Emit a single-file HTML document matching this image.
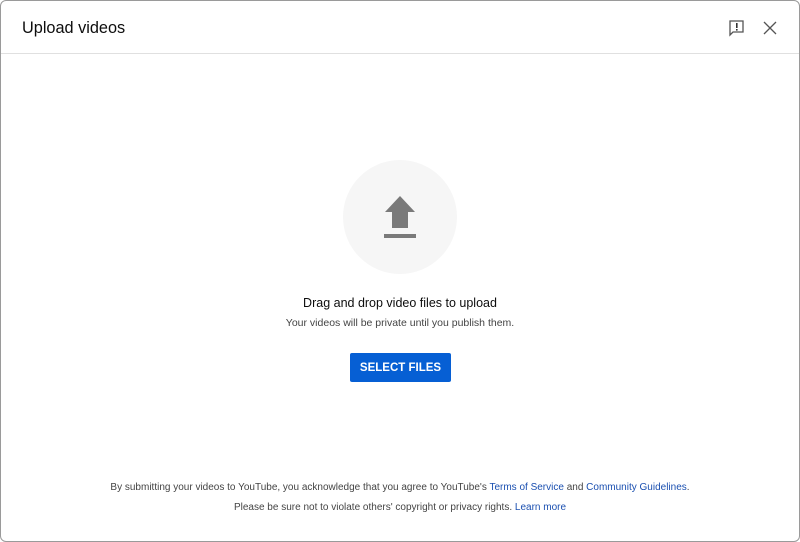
<!DOCTYPE html>
<html><head><style>
html,body{margin:0;padding:0;background:#fff;}
body{width:800px;height:542px;overflow:hidden;font-family:"Liberation Sans",Arial,sans-serif;position:relative;}
.frame{position:absolute;left:0;top:0;width:798px;height:540px;border:1px solid #9a9a9a;border-radius:6px;background:#fff;}
.hdr{position:absolute;left:0;top:0;right:0;height:52px;border-bottom:1px solid #e0e0e0;}
.title{position:absolute;left:21px;top:18px;font-size:16.3px;color:#0d0d0d;}
.circle{position:absolute;left:343px;top:160px;width:114px;height:114px;border-radius:50%;background:#f6f6f6;}
.t1{position:absolute;left:0;width:800px;top:296px;text-align:center;font-size:12.5px;color:#0d0d0d;}
.t2{position:absolute;left:0;width:800px;top:317px;text-align:center;font-size:10.5px;color:#444;}
.btn{position:absolute;left:350px;top:353px;width:101px;height:29px;background:#065fd4;color:#fff;font-size:11.5px;font-weight:bold;text-align:center;line-height:30px;border-radius:2px;}
.f1{position:absolute;left:0;width:800px;top:482px;text-align:center;font-size:10px;color:#444;}
.f2{position:absolute;left:0;width:800px;top:502px;text-align:center;font-size:10px;color:#444;}
a{color:#1a4fb0;text-decoration:none;}
</style></head><body>
<div class="frame">
<div class="hdr"><div class="title">Upload videos</div>
<svg style="position:absolute;left:727px;top:18px" width="18" height="18" viewBox="0 0 18 18"><path d="M2 2H15V13H5L2 16Z" fill="none" stroke="#555" stroke-width="1.3"/><rect x="8" y="4" width="1.6" height="5" fill="#333"/><rect x="8" y="10" width="1.6" height="1.6" fill="#333"/></svg>
<svg style="position:absolute;left:761px;top:19px" width="16" height="16" viewBox="0 0 16 16"><path d="M2 2L14 14M14 2L2 14" stroke="#555" stroke-width="1.3"/></svg>
</div>
</div>
<div class="circle"></div>
<svg style="position:absolute;left:380px;top:192px" width="40" height="50" viewBox="0 0 40 50"><path d="M20 4L35 20H28V36H12V20H5Z" fill="#7a7a7a"/><rect x="4" y="42" width="32" height="4" fill="#7a7a7a"/></svg>
<div class="t1">Drag and drop video files to upload</div>
<div class="t2">Your videos will be private until you publish them.</div>
<div class="btn">SELECT FILES</div>
<div class="f1">By submitting your videos to YouTube, you acknowledge that you agree to YouTube's <a>Terms of Service</a> and <a>Community Guidelines</a>.</div>
<div class="f2">Please be sure not to violate others' copyright or privacy rights. <a>Learn more</a></div>
</body></html>
